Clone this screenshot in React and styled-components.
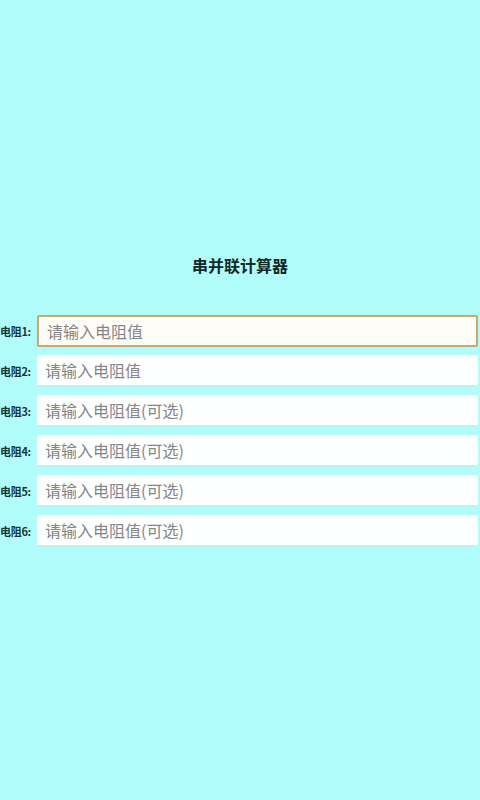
import React from "react";
import styled, { createGlobalStyle } from "styled-components";

const GlobalStyle = createGlobalStyle`
  html, body {
    margin: 0;
    padding: 0;
    background: #b0fdfc;
  }
  body {
    font-family: "Noto Sans CJK SC", "Noto Sans", sans-serif;
  }
`;

const Page = styled.div`
  width: 480px;
  height: 800px;
  background: #b0fdfc;
  display: flex;
  flex-direction: column;
  padding-top: 251px;
  box-sizing: border-box;
`;

const Title = styled.h1`
  margin: 0 0 36px;
  text-align: center;
  font-size: 16px;
  line-height: 28px;
  font-weight: 700;
  color: #102828;
`;

const Form = styled.div`
  display: flex;
  flex-direction: column;
  gap: 8px;
`;

const Row = styled.label`
  display: flex;
  align-items: center;
  height: 32px;
`;

const Label = styled.span`
  width: 37px;
  flex-shrink: 0;
  font-size: 11px;
  font-weight: 700;
  color: #173636;
  white-space: nowrap;
  letter-spacing: -0.3px;
`;

const Input = styled.input`
  flex: 1;
  height: 32px;
  margin-right: 2px;
  box-sizing: border-box;
  padding: 0 8px;
  border: ${(p) => (p.$focused ? "2px solid #c9a868" : "none")};
  border-bottom: ${(p) => (p.$focused ? "2px solid #c9a868" : "2px solid #c2f2f0")};
  border-radius: 2px;
  background: ${(p) => (p.$focused ? "#fffdf8" : "#fdffff")};
  font-family: "Noto Sans CJK SC", "Noto Sans", sans-serif;
  font-size: 16px;
  color: #333;
  outline: none;

  &::placeholder {
    color: #858585;
  }
`;

const fields = [
  { label: "电阻1:", hint: "请输入电阻值" },
  { label: "电阻2:", hint: "请输入电阻值" },
  { label: "电阻3:", hint: "请输入电阻值(可选)" },
  { label: "电阻4:", hint: "请输入电阻值(可选)" },
  { label: "电阻5:", hint: "请输入电阻值(可选)" },
  { label: "电阻6:", hint: "请输入电阻值(可选)" },
];

const App = () => {
  return (
    <Page>
      <GlobalStyle />
      <Title>串并联计算器</Title>
      <Form>
        {fields.map((f, i) => (
          <Row key={f.label}>
            <Label>{f.label}</Label>
            <Input placeholder={f.hint} $focused={i === 0} />
          </Row>
        ))}
      </Form>
    </Page>
  );
};

export default App;
